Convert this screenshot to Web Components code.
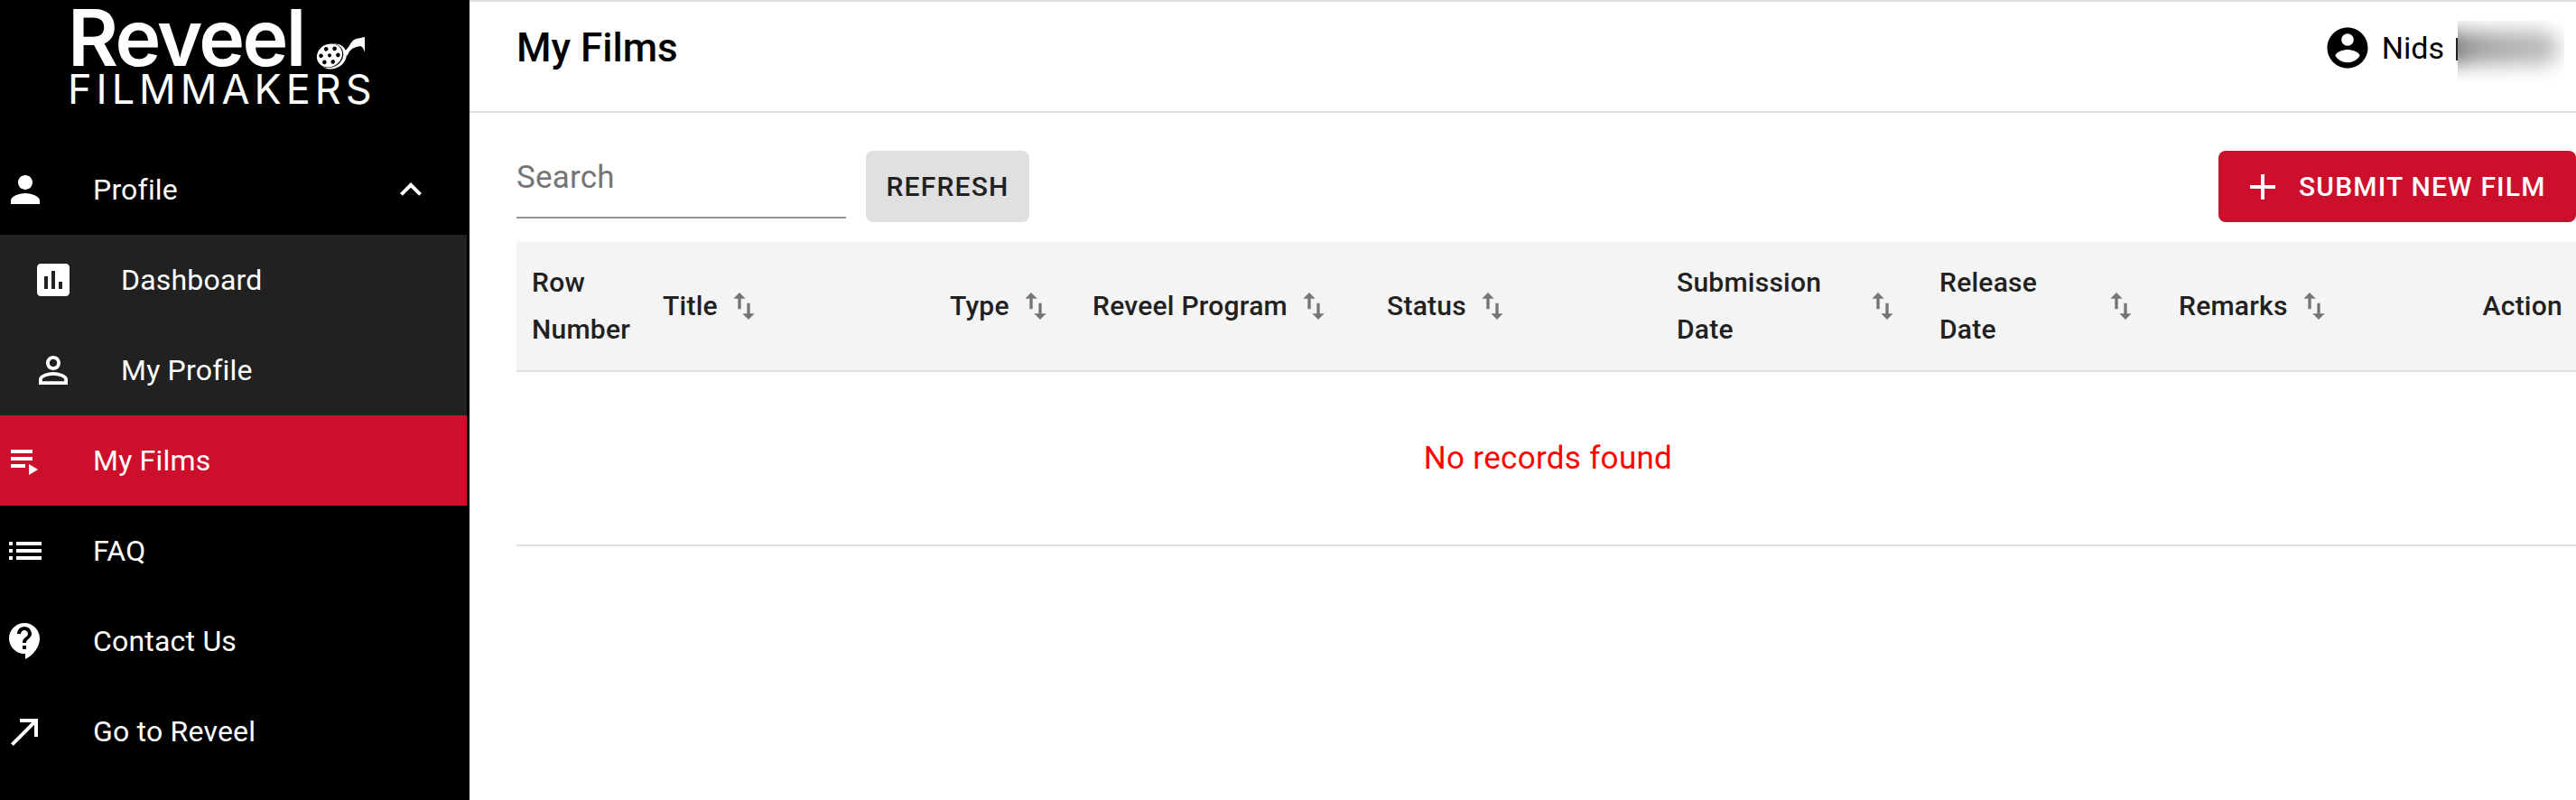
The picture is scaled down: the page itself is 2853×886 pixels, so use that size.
<!DOCTYPE html>
<html>
<head>
<meta charset="utf-8">
<style>
    html, body { margin: 0; height: 100%; overflow: hidden; background: #fff; }
    body { font-family: Roboto, "Liberation Sans", sans-serif; }
</style>
</head>
<body>
<app-shell>
    <side-nav slot="nav">
        <reveel-logo></reveel-logo>
        <nav-item icon="person" expand>Profile</nav-item>
        <div style="background:#212121">
            <nav-item icon="poll" sub>Dashboard</nav-item>
            <nav-item icon="personOutline" sub>My Profile</nav-item>
        </div>
        <nav-item icon="playlist" active>My Films</nav-item>
        <nav-item icon="list">FAQ</nav-item>
        <nav-item icon="contact">Contact Us</nav-item>
        <nav-item icon="northEast">Go to Reveel</nav-item>
    </side-nav>
    <top-bar heading="My Films" user="Nids"></top-bar>
    <film-toolbar></film-toolbar>
    <films-table></films-table>
</app-shell>
<script>
const ICONS = {
    person: 'M12 12c2.21 0 4-1.79 4-4s-1.79-4-4-4-4 1.79-4 4 1.79 4 4 4zm0 2c-2.67 0-8 1.34-8 4v2h16v-2c0-2.66-5.33-4-8-4z',
    poll: 'M19 3H5c-1.1 0-2 .9-2 2v14c0 1.1.9 2 2 2h14c1.1 0 2-.9 2-2V5c0-1.1-.9-2-2-2zM9 17H7v-7h2v7zm4 0h-2V7h2v10zm4 0h-2v-4h2v4z',
    personOutline: 'M12 5.9c1.16 0 2.1.94 2.1 2.1s-.94 2.1-2.1 2.1S9.9 9.16 9.9 8s.94-2.1 2.1-2.1m0 9c2.97 0 6.1 1.46 6.1 2.1v1.1H5.9V17c0-.64 3.13-2.1 6.1-2.1M12 4C9.79 4 8 5.79 8 8s1.79 4 4 4 4-1.79 4-4-1.79-4-4-4zm0 9c-2.67 0-8 1.34-8 4v3h16v-3c0-2.66-5.33-4-8-4z',
    playlist: 'M4 10h12v2H4zm0-4h12v2H4zm0 8h8v2H4zm10 0v6l5-3z',
    list: 'M3 13h2v-2H3v2zm0 4h2v-2H3v2zm0-8h2V7H3v2zm4 4h14v-2H7v2zm0 4h14v-2H7v2zM7 7v2h14V7H7z',
    contact: 'M11.5 2C6.81 2 3 5.81 3 10.5S6.81 19 11.5 19h.5v3c4.86-2.34 8-7 8-11.5C20 5.81 16.19 2 11.5 2zm1 14.5h-2v-2h2v2zm0-3.5h-2c0-3.25 3-3 3-5 0-1.1-.9-2-2-2s-2 .9-2 2h-2c0-2.21 1.79-4 4-4s4 1.79 4 4c0 2.5-3 2.75-3 5z',
    northEast: 'M9 5v2h6.59L4 18.59 5.41 20 17 8.41V15h2V5z',
    chevron: 'M12 8l-6 6 1.41 1.41L12 10.83l4.59 4.58L18 14z',
    account: 'M12 2C6.48 2 2 6.48 2 12s4.48 10 10 10 10-4.48 10-10S17.52 2 12 2zm0 3c1.66 0 3 1.34 3 3s-1.34 3-3 3-3-1.34-3-3 1.34-3 3-3zm0 14.2c-2.5 0-4.71-1.28-6-3.22.03-1.99 4-3.08 6-3.08 1.99 0 5.97 1.09 6 3.08-1.29 1.94-3.5 3.22-6 3.22z',
    plus: 'M19 13h-6v6h-2v-6H5v-2h6V5h2v6h6v2z',
    sort: 'M16 17.01V10h-2v7.01h-3L15 21l4-3.99h-3zM9 3L5 6.99h3V14h2V6.99h3L9 3z'
}
const svgIcon = (name, size) => `<svg width="${size}" height="${size}" viewBox="0 0 24 24" fill="currentColor"><path d="${ICONS[name]}"/></svg>`

class AppShell extends HTMLElement {
    constructor() {
        super();
        this.attachShadow({mode: 'open'}).innerHTML = `
            <style>
                :host { display: grid; grid-template-columns: 520px 1fr; height: 886px; overflow: hidden; }
                main { min-width: 0; border-top: 2px solid #e0e0e0; box-sizing: border-box; }
            </style>
            <slot name="nav"></slot>
            <main><slot></slot></main>
        `
    }
}
class SideNav extends HTMLElement {
    constructor() {
        super();
        this.attachShadow({mode: 'open'}).innerHTML = `
            <style>
                :host { display: block; background: #000; color: #fff; padding-right: 3px; height: 886px; box-sizing: border-box; }
            </style>
            <slot></slot>
        `
    }
}
class ReveelLogo extends HTMLElement {
    constructor() {
        super();
        this.attachShadow({mode: 'open'}).innerHTML = `
            <style>
                :host { display: block; height: 160px; box-sizing: border-box; padding: 5px 0 0 75px; font-family: Inter, sans-serif; color: #fff; }
                .top { display: flex; align-items: flex-end; height: 74px; }
                .name { font-size: 86px; font-weight: 600; line-height: 74px; letter-spacing: -2.6px; height: 74px; }
                svg { margin: 0 0 0 13px; flex: none; }
                .sub { font-size: 45px; line-height: 42px; letter-spacing: 5px; font-weight: 400; margin-top: -1px; }
            </style>
            <div class="top">
                <span class="name">Reveel</span>
                <svg width="56" height="38" viewBox="0 0 56 38">
                    <path fill="#fff" d="M32 15c4-2 6-9 10-12 4-2 9-2 12-3v17c-1-3-2-6-5-7-5 1-9 2-12 6-1 2-2 4-3 5z"/>
                    <g transform="rotate(-28 17 21)">
                        <ellipse cx="18" cy="22" rx="16" ry="13.5" fill="#fff"/>
                        <ellipse cx="16" cy="20" rx="15" ry="13" fill="#000"/>
                        <ellipse cx="15.5" cy="19.5" rx="14.5" ry="12.5" fill="#fff"/>
                        <g fill="#000">
                            <circle cx="15.5" cy="19.5" r="2"/><circle cx="15.5" cy="11.5" r="2.3"/><circle cx="15.5" cy="27.5" r="2.3"/>
                            <circle cx="7" cy="15.5" r="2.3"/><circle cx="24" cy="15.5" r="2.3"/><circle cx="7" cy="23.5" r="2.3"/><circle cx="24" cy="23.5" r="2.3"/>
                        </g>
                    </g>
                </svg>
            </div>
            <div class="sub">FILMMAKERS</div>
        `
    }
}
class NavItem extends HTMLElement {
    connectedCallback() {
        const sub = this.hasAttribute('sub');
        this.attachShadow({mode: 'open'}).innerHTML = `
            <style>
                :host { display: flex; align-items: center; height: 100px; padding-left: ${sub ? 35 : 4}px; padding-right: 38px; gap: ${sub ? 51 : 51}px;
                    font-size: 32px; letter-spacing: .2px; color: #fff; }
                :host([active]) { background: #cc102c; }
                svg { flex: none; display: block; }
                span { flex: 1; }
            </style>
            ${svgIcon(this.getAttribute('icon'), 48)}
            <span><slot></slot></span>
            ${this.hasAttribute('expand') ? svgIcon('chevron', 48) : ''}
        `
    }
}
class TopBar extends HTMLElement {
    connectedCallback() {
        this.attachShadow({mode: 'open'}).innerHTML = `
            <style>
                :host { display: flex; align-items: center; height: 101px; padding: 0 0 20px 52px; border-bottom: 2px solid #e0e0e0; color: #000; }
                h1 { flex: 1; margin: 0; font-size: 44px; font-weight: 500; }
                .user { display: flex; align-items: center; font-size: 34px; padding-right: 13px; }
                svg { display: block; margin-right: 11px; }
                .hidden { position: relative; width: 118px; height: 68px; margin-left: 15px; overflow: hidden; margin-top: 8px; }
                .hidden i { position: absolute; left: -34px; top: 12px; width: 146px; height: 36px; border-radius: 18px; filter: blur(11px);
                    background: linear-gradient(90deg, #444, #a0a0a0 35%, #b4b4b4 75%, #bbb); }
                .cut { width: 2px; height: 25px; background: #222; margin: 4px -15px 0 13px; flex: none; }
            </style>
            <h1>${this.getAttribute('heading')}</h1>
            <div class="user">
                ${svgIcon('account', 54)}
                <span>${this.getAttribute('user')}</span>
                <div class="cut"></div>
                <div class="hidden"><i></i></div>
            </div>
        `
    }
}
class FilmToolbar extends HTMLElement {
    constructor() {
        super();
        this.attachShadow({mode: 'open'}).innerHTML = `
            <style>
                :host { display: flex; align-items: flex-start; padding: 42px 0 0 52px; height: 101px; box-sizing: content-box; font-family: Roboto, sans-serif; }
                .search { width: 365px; height: 75px; box-sizing: border-box; border-bottom: 2px solid #949494; font-size: 35px; color: #757575; letter-spacing: .2px; padding-top: 11px; line-height: 38px; }
                button { font: 500 30px Roboto, sans-serif; letter-spacing: 1.2px; text-transform: uppercase; border: 0; border-radius: 8px; height: 79px; display: flex; align-items: center; }
                .refresh { background: #e0e0e0; color: #212121; margin-left: 22px; width: 181px; justify-content: center; padding: 0; }
                .submit { background: #cc102c; color: #fff; margin-left: auto; width: 396px; padding: 0 0 0 25px; flex: none; gap: 16px; }
                svg { display: block; }
            </style>
            <div class="search">Search</div>
            <button class="refresh">Refresh</button>
            <button class="submit">${svgIcon('plus', 48)}<span>Submit new film</span></button>
        `
    }
}
class SortHeader extends HTMLElement {
    connectedCallback() {
        this.attachShadow({mode: 'open'}).innerHTML = `
            <style>
                :host { display: flex; align-items: center; font-size: 30px; font-weight: 500; line-height: 52px; color: #212121; letter-spacing: .25px; padding-left: 18px; }
                svg { flex: none; display: block; color: #757575; margin-left: var(--sort-gap, 9px); }
                .wrap { width: var(--label-w, auto); }
            </style>
            <span class="wrap"><slot></slot></span>
            ${svgIcon('sort', 40)}
        `
    }
}
class FilmsTable extends HTMLElement {
    constructor() {
        super();
        this.attachShadow({mode: 'open'}).innerHTML = `
            <style>
                :host { display: block; margin-left: 52px; }
                .head { display: grid; grid-template-columns: 144px 318px 158px 326px 321px 291px 265px 301px 1fr; background: #f4f4f4; height: 142px; align-items: center; border-bottom: 2px solid #e0e0e0; }
                .plain { font-size: 30px; font-weight: 500; line-height: 52px; color: #212121; letter-spacing: .25px; padding-left: 17px; }
                .action { text-align: right; padding: 0 15px 0 0; }
                .empty { height: 191px; border-bottom: 2px solid #e0e0e0; display: flex; align-items: center; justify-content: center; color: #f00; font-size: 35px; letter-spacing: .3px; padding-left: 4px; }
            </style>
            <div class="head">
                <div class="plain">Row<br>Number</div>
                <sort-header>Title</sort-header>
                <sort-header>Type</sort-header>
                <sort-header>Reveel Program</sort-header>
                <sort-header>Status</sort-header>
                <sort-header style="--label-w:208px;--sort-gap:0px">Submission<br>Date</sort-header>
                <sort-header style="--label-w:181px;--sort-gap:0px">Release<br>Date</sort-header>
                <sort-header>Remarks</sort-header>
                <div class="plain action">Action</div>
            </div>
            <div class="empty">No records found</div>
        `
    }
}
customElements.define('app-shell', AppShell)
customElements.define('side-nav', SideNav)
customElements.define('reveel-logo', ReveelLogo)
customElements.define('nav-item', NavItem)
customElements.define('top-bar', TopBar)
customElements.define('film-toolbar', FilmToolbar)
customElements.define('sort-header', SortHeader)
customElements.define('films-table', FilmsTable)
</script>
</body>
</html>
